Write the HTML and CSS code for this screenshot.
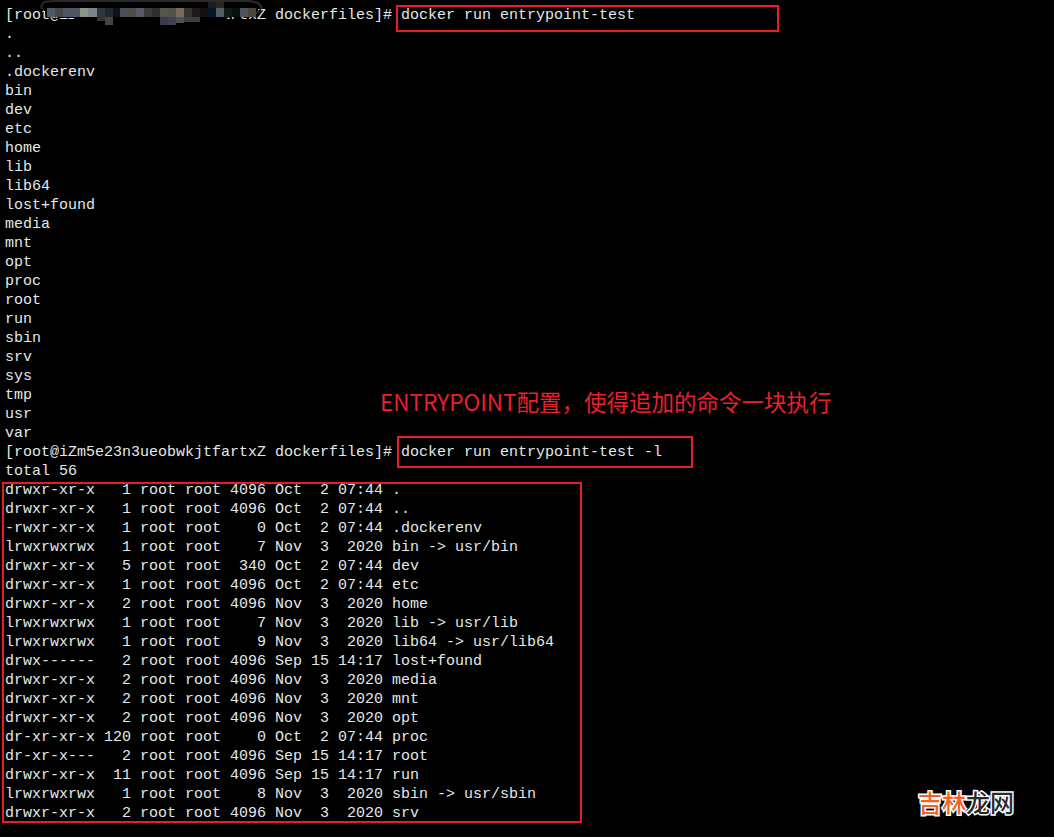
FILE: index.html
```html
<!DOCTYPE html>
<html lang="zh">
<head>
<meta charset="utf-8">
<title>docker run entrypoint-test</title>
<link rel="stylesheet" href="styles.css">
</head>
<body>
<main class="terminal">
<div class="output">
<div class="line">[root@iZm5e23n3ueobwkjtfartxZ dockerfiles]# docker run entrypoint-test</div>
<div class="line">.</div>
<div class="line">..</div>
<div class="line">.dockerenv</div>
<div class="line">bin</div>
<div class="line">dev</div>
<div class="line">etc</div>
<div class="line">home</div>
<div class="line">lib</div>
<div class="line">lib64</div>
<div class="line">lost+found</div>
<div class="line">media</div>
<div class="line">mnt</div>
<div class="line">opt</div>
<div class="line">proc</div>
<div class="line">root</div>
<div class="line">run</div>
<div class="line">sbin</div>
<div class="line">srv</div>
<div class="line">sys</div>
<div class="line">tmp</div>
<div class="line">usr</div>
<div class="line">var</div>
<div class="line">[root@iZm5e23n3ueobwkjtfartxZ dockerfiles]# docker run entrypoint-test -l</div>
<div class="line">total 56</div>
<div class="line">drwxr-xr-x   1 root root 4096 Oct  2 07:44 .</div>
<div class="line">drwxr-xr-x   1 root root 4096 Oct  2 07:44 ..</div>
<div class="line">-rwxr-xr-x   1 root root    0 Oct  2 07:44 .dockerenv</div>
<div class="line">lrwxrwxrwx   1 root root    7 Nov  3  2020 bin -> usr/bin</div>
<div class="line">drwxr-xr-x   5 root root  340 Oct  2 07:44 dev</div>
<div class="line">drwxr-xr-x   1 root root 4096 Oct  2 07:44 etc</div>
<div class="line">drwxr-xr-x   2 root root 4096 Nov  3  2020 home</div>
<div class="line">lrwxrwxrwx   1 root root    7 Nov  3  2020 lib -> usr/lib</div>
<div class="line">lrwxrwxrwx   1 root root    9 Nov  3  2020 lib64 -> usr/lib64</div>
<div class="line">drwx------   2 root root 4096 Sep 15 14:17 lost+found</div>
<div class="line">drwxr-xr-x   2 root root 4096 Nov  3  2020 media</div>
<div class="line">drwxr-xr-x   2 root root 4096 Nov  3  2020 mnt</div>
<div class="line">drwxr-xr-x   2 root root 4096 Nov  3  2020 opt</div>
<div class="line">dr-xr-xr-x 120 root root    0 Oct  2 07:44 proc</div>
<div class="line">dr-xr-x---   2 root root 4096 Sep 15 14:17 root</div>
<div class="line">drwxr-xr-x  11 root root 4096 Sep 15 14:17 run</div>
<div class="line">lrwxrwxrwx   1 root root    8 Nov  3  2020 sbin -> usr/sbin</div>
<div class="line">drwxr-xr-x   2 root root 4096 Nov  3  2020 srv</div>
</div>

<svg class="smear" viewBox="0 0 240 30" width="240" height="30" shape-rendering="crispEdges" aria-hidden="true">
  <path class="smear-fill" d="M13 8 L17 8 L226 8 L205 8 L192 26 L50 26 L44 18 L17 17 Z"/>
  <rect x="17" y="8" width="209" height="9" fill="#000"/>
  <path class="smear-edge" shape-rendering="auto" d="M12 9 C10 3 14 1 24 1 L215 1 C226 1 232 4 231 8 C230 11 226 14 218 16"/>
  <rect x="17" y="8" width="8" height="9" fill="#4a5a66"/>
  <rect x="25" y="8" width="8" height="9" fill="#4a4644"/>
  <rect x="33" y="8" width="17" height="9" fill="#4f5560"/>
  <rect x="50" y="8" width="8" height="9" fill="#8a9488"/>
  <rect x="58" y="8" width="9" height="9" fill="#7d828a"/>
  <rect x="67" y="8" width="8" height="9" fill="#2e363a"/>
  <rect x="75" y="8" width="8" height="9" fill="#1e2a2e"/>
  <rect x="83" y="8" width="7" height="9" fill="#101418"/>
  <rect x="90" y="8" width="8" height="9" fill="#4e5056"/>
  <rect x="98" y="8" width="8" height="9" fill="#4f4e48"/>
  <rect x="106" y="8" width="8" height="9" fill="#5c5868"/>
  <rect x="114" y="8" width="8" height="9" fill="#3a3a3c"/>
  <rect x="122" y="8" width="8" height="9" fill="#2e2e28"/>
  <rect x="130" y="8" width="8" height="9" fill="#555550"/>
  <rect x="138" y="8" width="8" height="9" fill="#50544a"/>
  <rect x="146" y="8" width="8" height="9" fill="#7a6a5c"/>
  <rect x="154" y="8" width="8" height="9" fill="#33352f"/>
  <rect x="162" y="8" width="8" height="9" fill="#1e1a1a"/>
  <rect x="170" y="8" width="8" height="9" fill="#141014"/>
  <rect x="178" y="8" width="8" height="9" fill="#041828"/>
  <rect x="186" y="8" width="8" height="9" fill="#555c68"/>
  <rect x="194" y="8" width="8" height="9" fill="#101a1a"/>
  <rect x="202" y="8" width="8" height="9" fill="#0a0e0e"/>
  <rect x="210" y="8" width="8" height="9" fill="#50545a"/>
  <rect x="218" y="8" width="8" height="9" fill="#4a4440"/>
  <rect x="178" y="2" width="8" height="6" fill="#1a1e22"/>
  <rect x="186" y="2" width="8" height="6" fill="#2a261e"/>
  <rect x="67" y="17" width="8" height="4" fill="#33363a"/>
  <rect x="75" y="17" width="8" height="8" fill="#44463f"/>
  <rect x="130" y="17" width="8" height="8" fill="#3a3a4c"/>
  <rect x="138" y="17" width="8" height="8" fill="#40424e"/>
  <rect x="146" y="17" width="8" height="6" fill="#4a5054"/>
  <rect x="154" y="17" width="16" height="5" fill="#3c3e3e"/>
</svg>

<div class="mark mark-first"></div>
<div class="mark mark-second"></div>
<div class="mark mark-listing"></div>

<p class="note">ENTRYPOINT配置，使得追加的命令一块执行</p>
<p class="stamp"><span class="stamp-warm">吉林</span><span class="stamp-cool">龙网</span></p>
</main>
</body>
</html>
```
FILE: styles.css
```css
html, body {
  margin: 0;
  height: 100%;
  background: #000;
}

.terminal {
  position: relative;
  height: 837px;
  overflow: hidden;
  background: #000;
}

.output {
  display: flex;
  flex-direction: column;
  align-items: flex-start;
  padding: 6px 0 0 5px;
  font-family: "Liberation Mono", monospace;
  font-size: 15px;
  line-height: 19px;
  color: #e2e9e9;
}

.line {
  white-space: pre;
}

.smear {
  position: absolute;
  left: 30px;
  top: 0;
}

.smear-fill {
  fill: #000;
}

.smear-edge {
  fill: none;
  stroke: #2a2a2a;
  stroke-width: 2;
}

.mark {
  position: absolute;
  box-sizing: border-box;
  border: 2px solid #ea1c24;
}

.mark-first {
  left: 396px;
  top: 5px;
  width: 383px;
  height: 27px;
}

.mark-second {
  left: 397px;
  top: 436px;
  width: 296px;
  height: 32px;
}

.mark-listing {
  left: 2px;
  top: 482px;
  width: 580px;
  height: 341px;
}

.note {
  position: absolute;
  left: 380px;
  top: 385px;
  margin: 0;
  font-family: "Noto Sans CJK SC", sans-serif;
  font-size: 22.5px;
  font-weight: 400;
  line-height: 32px;
  color: #e8202a;
  white-space: nowrap;
}

.stamp {
  position: absolute;
  left: 918px;
  top: 784px;
  margin: 0;
  font-family: "Noto Sans CJK SC", sans-serif;
  font-size: 24px;
  font-weight: 500;
  line-height: 36px;
  white-space: nowrap;
  -webkit-text-stroke: 3px #fff;
  paint-order: stroke fill;
}

.stamp-warm {
  color: #f4641e;
}

.stamp-cool {
  color: #2a2a2a;
}
```
